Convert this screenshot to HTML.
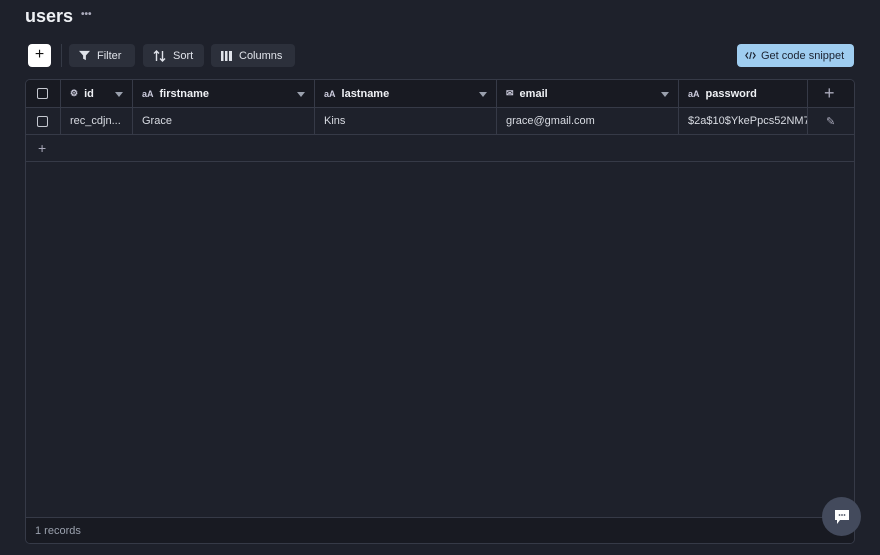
<!DOCTYPE html>
<html><head><style>
*{box-sizing:border-box;margin:0;padding:0}
body{width:880px;height:555px;background:#1e212b;font-family:"Liberation Sans",sans-serif;color:#e6e8ee;position:relative;overflow:hidden;font-size:11px}
.title{position:absolute;left:25px;top:6px;font-size:18px;font-weight:bold;color:#eef0f4}
.dots{position:absolute;left:81px;top:9px;font-size:10px;color:#aab;font-weight:bold}
.btn{position:absolute;top:44px;height:23px;border-radius:4px;background:#2c303b;color:#e0e3ea;font-size:11px;display:flex;align-items:center;padding:0 10px;gap:7px;white-space:nowrap}
.plus{position:absolute;left:28px;top:44px;width:23px;height:23px;background:#fff;border-radius:4px;color:#111;font-size:16px;text-align:center;line-height:22px}
.sep{position:absolute;left:61px;top:44px;width:1px;height:23px;background:#353a46}
.code{left:737px;width:117px;background:#9fcdf0;color:#1b2230;padding:0 8px;gap:5px}
.tbl{position:absolute;left:25px;top:79px;width:830px;height:465px;border:1px solid #363a47;border-radius:5px;overflow:hidden}
.row{position:absolute;left:0;width:828px;border-bottom:1px solid #363a47}
.hdr{top:0;height:28px;background:#181a22}
.r1{top:28px;height:27px}
.r2{top:55px;height:27px}
.c{position:absolute;top:0;height:100%;border-right:1px solid #363a47;display:flex;align-items:center;padding-left:9px}
.hdr .c{font-weight:bold;color:#eef0f4}
.cb{width:11px;height:11px;border:1.5px solid #c5c8d0;border-radius:2px;margin-left:2px}
.arr{position:absolute;right:9px;top:12px;border-left:4px solid transparent;border-right:4px solid transparent;border-top:5px solid #9aa0ad}
.ic{font-size:9px;color:#ccd;margin-right:6px;font-weight:bold}
.foot{position:absolute;left:0;top:437px;width:828px;height:27px;background:#181a22;border-top:1px solid #363a47;color:#9aa0ad;font-size:11px;padding:7px 9px}
.chat{position:absolute;left:822px;top:497px;width:39px;height:39px;border-radius:50%;background:#434a5c}
.r1 .c{color:#d8dbe2}
</style></head><body>
<div class="title">users</div><div class="dots">•••</div>
<div class="plus">+</div><div class="sep"></div>
<div class="btn" style="left:69px;width:66px"><svg width="11" height="11" viewBox="0 0 12 12"><path d="M0 1h12L7.5 6v5L4.5 9.5V6z" fill="#e0e3ea"/></svg>Filter</div>
<div class="btn" style="left:143px;width:61px"><svg width="13" height="12" viewBox="0 0 13 12"><path d="M3.5 11V1M1 3.5l2.5-2.5 2.5 2.5M9.5 1v10M7 8.5l2.5 2.5 2.5-2.5" stroke="#e0e3ea" stroke-width="1.4" fill="none"/></svg>Sort</div>
<div class="btn" style="left:211px;width:84px"><svg width="11" height="10" viewBox="0 0 11 10"><rect x="0" width="2.5" height="10" fill="#e0e3ea"/><rect x="4" width="2.5" height="10" fill="#e0e3ea"/><rect x="8" width="3" height="10" fill="#e0e3ea"/></svg>Columns</div>
<div class="btn code"><svg width="11" height="9" viewBox="0 0 11 9"><path d="M3 1.5L0.8 4.5 3 7.5M8 1.5l2.2 3L8 7.5M6.3 1L4.7 8" stroke="#1b2230" stroke-width="1.1" fill="none"/></svg>Get code snippet</div>
<div class="tbl">
<div class="row hdr">
<div class="c" style="left:0;width:35px"><div class="cb"></div></div>
<div class="c" style="left:35px;width:72px"><span class="ic">⚙</span>id<span class="arr"></span></div>
<div class="c" style="left:107px;width:182px"><span class="ic">aA</span>firstname<span class="arr"></span></div>
<div class="c" style="left:289px;width:182px"><span class="ic">aA</span>lastname<span class="arr"></span></div>
<div class="c" style="left:471px;width:182px"><span class="ic">✉</span>email<span class="arr"></span></div>
<div class="c" style="left:653px;width:129px"><span class="ic">aA</span>password</div>
<div class="c" style="left:782px;width:46px;border:none;padding-left:16px;font-size:18px;font-weight:normal;color:#aab">+</div>
</div>
<div class="row r1">
<div class="c" style="left:0;width:35px"><div class="cb"></div></div>
<div class="c" style="left:35px;width:72px">rec_cdjn...</div>
<div class="c" style="left:107px;width:182px">Grace</div>
<div class="c" style="left:289px;width:182px">Kins</div>
<div class="c" style="left:471px;width:182px">grace@gmail.com</div>
<div class="c" style="left:653px;width:129px;overflow:hidden;white-space:nowrap">$2a$10$YkePpcs52NM7</div>
<div class="c" style="left:782px;width:46px;border:none;padding-left:18px;color:#aab">✎</div>
</div>
<div class="row r2"><div class="c" style="left:0;width:35px;border:none;padding-left:12px;font-size:14px;color:#aab">+</div></div>
<div class="foot">1 records</div>
</div>
<div class="chat"><svg style="position:absolute;left:12px;top:12px" width="16" height="17" viewBox="0 0 16 17"><path d="M1 1h14v10H6l-3 4v-4H1z" fill="#fff"/><circle cx="5.5" cy="6" r="0.9" fill="#434a5c"/><circle cx="8" cy="6" r="0.9" fill="#434a5c"/><circle cx="10.5" cy="6" r="0.9" fill="#434a5c"/></svg></div>
</body></html>
